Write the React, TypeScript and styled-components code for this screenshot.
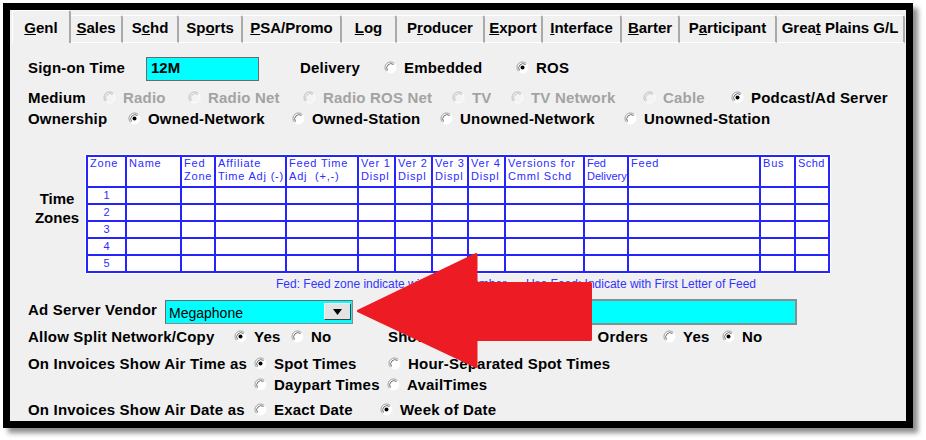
import React from "react";
import styled, { createGlobalStyle } from "styled-components";

const Global = createGlobalStyle`
  html, body { margin: 0; padding: 0; background: #ffffff; }
  body { font-family: "Liberation Sans", Arial, sans-serif; }
`;

const Page = styled.div`
  position: relative;
  width: 926px;
  height: 440px;
  padding: 3px 0 0 3px;
  box-sizing: border-box;
  overflow: hidden;
`;

const Frame = styled.div`
  width: 910px;
  height: 425px;
  box-sizing: border-box;
  border: 7px solid #000;
  background: #f0f0f0;
  box-shadow: 5px 5px 5px rgba(0, 0, 0, 0.45);
  display: flex;
  flex-direction: column;
  overflow: hidden;
`;

const TabStrip = styled.div`
  height: 33px;
  flex: none;
  display: flex;
  align-items: flex-end;
  padding-left: 2px;
`;

const Tab = styled.div<{ $w: number; $active?: boolean }>`
  width: ${(p) => p.$w}px;
  flex: none;
  box-sizing: border-box;
  height: ${(p) => (p.$active ? 33 : 28)}px;
  display: flex;
  justify-content: center;
  align-items: flex-start;
  padding-top: ${(p) => (p.$active ? 9 : 4)}px;
  border-top: 1px solid #ffffff;
  border-left: ${(p) => (p.$active ? "1px solid #ffffff" : "none")};
  border-right: 2px solid #a9a9a9;
  border-bottom: ${(p) => (p.$active ? "none" : "1px solid #ffffff")};
  border-top-right-radius: 3px;
  border-top-left-radius: ${(p) => (p.$active ? 3 : 0)}px;
  font-size: 15px;
  font-weight: bold;
  line-height: 16px;
  color: #000;
  white-space: pre;
`;

const Content = styled.div`
  display: flex;
  flex-direction: column;
  padding: 14px 0 0 18px;
`;

const Row = styled.div<{ $h: number; $mt?: number }>`
  display: flex;
  align-items: center;
  height: ${(p) => p.$h}px;
  margin-top: ${(p) => p.$mt ?? 0}px;
  flex: none;
`;

const Label = styled.span<{ $w?: number; $ml?: number; $lift?: number }>`
  flex: none;
  width: ${(p) => (p.$w ? `${p.$w}px` : "auto")};
  margin-left: ${(p) => p.$ml ?? 0}px;
  padding-bottom: ${(p) => p.$lift ?? 0}px;
  font-size: 15px;
  letter-spacing: 0.2px;
  font-weight: bold;
  color: #000;
  white-space: nowrap;
`;

const SplitLabel = styled.span<{ $w: number }>`
  flex: none;
  width: ${(p) => p.$w}px;
  margin-right: 15px;
  display: flex;
  justify-content: space-between;
  font-size: 15px;
  letter-spacing: 0.2px;
  font-weight: bold;
  color: #000;
  white-space: nowrap;
`;

const OptionWrap = styled.label<{ $w?: number; $disabled?: boolean; $lift?: number }>`
  flex: none;
  display: inline-flex;
  align-items: center;
  gap: 7px;
  width: ${(p) => (p.$w ? `${p.$w}px` : "auto")};
  padding-bottom: ${(p) => p.$lift ?? 0}px;
  font-size: 15px;
  letter-spacing: 0.2px;
  font-weight: bold;
  color: ${(p) => (p.$disabled ? "#a3a3a3" : "#000")};
  white-space: nowrap;
`;

const RadioSvg = styled.svg`
  flex: none;
  display: block;
`;

const CyanInput = styled.div<{ $w: number }>`
  flex: none;
  width: ${(p) => p.$w}px;
  height: 24px;
  box-sizing: border-box;
  background: #00ffff;
  border: 1px solid #6b6b6b;
  display: flex;
  align-items: center;
  padding: 0 0 3px 4px;
  font-size: 15px;
  font-weight: bold;
  color: #000;
`;

const Combo = styled.div`
  flex: none;
  width: 188px;
  height: 24px;
  box-sizing: border-box;
  background: #00ffff;
  border: 1px solid #8a8a8a;
  border-top-color: #6a6a6a;
  border-left-color: #6a6a6a;
  display: flex;
  align-items: center;
  justify-content: space-between;
  padding: 0 1px 0 3px;
`;

const ComboText = styled.span`
  font-size: 14px;
  color: #000;
  padding-top: 3px;
`;

const DropButton = styled.span`
  width: 27px;
  height: 17px;
  box-sizing: border-box;
  background: #e3e3e3;
  border: 1px solid;
  border-color: #f8f8f8 #404040 #404040 #f8f8f8;
  display: flex;
  align-items: center;
  justify-content: center;
`;

const WideBox = styled.div<{ $w: number; $ml: number }>`
  flex: none;
  width: ${(p) => p.$w}px;
  margin-left: ${(p) => p.$ml}px;
  height: 26px;
  box-sizing: border-box;
  background: #00ffff;
  border: 2px solid #8c8c8c;
`;

const ZoneSection = styled.div`
  display: flex;
  align-items: center;
  margin-top: 26px;
  flex: none;
`;

const ZoneLabel = styled.div`
  width: 58px;
  flex: none;
  text-align: center;
  font-size: 15px;
  font-weight: bold;
  line-height: 19px;
  color: #000;
  padding-bottom: 12px;
`;

const ZoneGrid = styled.div<{ $cols: string }>`
  display: grid;
  grid-template-columns: ${(p) => p.$cols};
  grid-template-rows: 29px repeat(5, 15px);
  gap: 2px;
  padding: 2px;
  background: #2424ff;
  box-shadow: 0 0 0 1px #ffffff;
  flex: none;
`;

const HeadCell = styled.div<{ $ls: number }>`
  background: #ffffff;
  color: #2c2cff;
  font-size: 11px;
  letter-spacing: ${(p) => p.$ls}px;
  line-height: 13px;
  padding: 0 0 0 2px;
  white-space: pre;
  overflow: visible;
`;

const BodyCell = styled.div`
  background: #ffffff;
  color: #2c2cff;
  font-size: 11px;
  line-height: 15px;
  text-align: center;
`;

const FootNote = styled.div`
  margin-top: 4px;
  margin-left: 248px;
  width: 480px;
  height: 14px;
  display: flex;
  justify-content: space-between;
  align-items: center;
  font-size: 12px;
  color: #3434ff;
  white-space: nowrap;
  flex: none;
`;

const ArrowLayer = styled.svg`
  position: absolute;
  left: 0;
  top: 0;
  pointer-events: none;
`;

function Radio({ checked, disabled }: { checked?: boolean; disabled?: boolean }) {
  return (
    <RadioSvg width="13" height="13" viewBox="0 0 13 13">
      <circle cx="6.5" cy="6.5" r="5.5" fill={disabled ? "#f4f4f4" : "#ffffff"} />
      <path d="M10.4 2.6 A5.5 5.5 0 0 0 2.6 10.4" fill="none" stroke={disabled ? "#b8b8b8" : "#9a9a9a"} strokeWidth="1" />
      <path d="M9.5 3.5 A4.3 4.3 0 0 0 3.5 9.5" fill="none" stroke={disabled ? "#c8c8c8" : "#6a6a6a"} strokeWidth="1" />
      <path d="M2.6 10.4 A5.5 5.5 0 0 0 10.4 2.6" fill="none" stroke="#ffffff" strokeWidth="1" />
      {checked && <circle cx="6.5" cy="6.5" r="2" fill="#000" />}
    </RadioSvg>
  );
}

function Option({
  text,
  w,
  checked,
  disabled,
  lift,
}: {
  text: string;
  w?: number;
  checked?: boolean;
  disabled?: boolean;
  lift?: number;
}) {
  return (
    <OptionWrap $w={w} $disabled={disabled} $lift={lift}>
      <Radio checked={checked} disabled={disabled} />
      <span>{text}</span>
    </OptionWrap>
  );
}

const tabs: { pre: string; key: string; post: string; w: number }[] = [
  { pre: "", key: "G", post: "enl", w: 59 },
  { pre: "", key: "S", post: "ales", w: 52 },
  { pre: "S", key: "c", post: "hd", w: 56 },
  { pre: "Sp", key: "o", post: "rts", w: 64 },
  { pre: "", key: "P", post: "SA/Promo", w: 99 },
  { pre: "", key: "L", post: "og", w: 55 },
  { pre: "P", key: "r", post: "oducer", w: 88 },
  { pre: "", key: "E", post: "xport", w: 58 },
  { pre: "", key: "I", post: "nterface", w: 79 },
  { pre: "", key: "B", post: "arter", w: 58 },
  { pre: "P", key: "a", post: "rticipant", w: 97 },
  { pre: "Grea", key: "t", post: " Plains G/L", w: 128 },
];

const columns: { head: string; w: number; ls?: number }[] = [
  { head: "Zone", w: 37 },
  { head: "Name", w: 53 },
  { head: "Fed\nZone", w: 32 },
  { head: "Affiliate\nTime Adj (-)", w: 69 },
  { head: "Feed Time\nAdj  (+,-)", w: 70 },
  { head: "Ver 1\nDispl", w: 35 },
  { head: "Ver 2\nDispl", w: 35 },
  { head: "Ver 3\nDispl", w: 34 },
  { head: "Ver 4\nDispl", w: 35 },
  { head: "Versions for\nCmml Schd", w: 77 },
  { head: "Fed\nDelivery", w: 42, ls: 0 },
  { head: "Feed", w: 130 },
  { head: "Bus", w: 33 },
  { head: "Schd", w: 32, ls: 0.4 },
];

export default function App() {
  const cols = columns.map((c) => `${c.w}px`).join(" ");
  return (
    <Page>
      <Global />
      <Frame>
        <TabStrip>
          {tabs.map((t, i) => (
            <Tab key={i} $w={t.w} $active={i === 0}>
              <span>
                {t.pre}
                <u>{t.key}</u>
                {t.post}
              </span>
            </Tab>
          ))}
        </TabStrip>
        <Content>
          <Row $h={24}>
            <Label $w={118} $lift={3}>Sign-on Time</Label>
            <CyanInput $w={113}>12M</CyanInput>
            <Label $w={84} $ml={41} $lift={3}>Delivery</Label>
            <Option text="Embedded" w={132} lift={3} />
            <Option text="ROS" checked lift={3} />
          </Row>
          <Row $h={21} $mt={6}>
            <Label $w={75}>Medium</Label>
            <Option text="Radio" w={85} disabled />
            <Option text="Radio Net" w={115} disabled />
            <Option text="Radio ROS Net" w={149} disabled />
            <Option text="TV" w={59} disabled />
            <Option text="TV Network" w={132} disabled />
            <Option text="Cable" w={88} disabled />
            <Option text="Podcast/Ad Server" checked />
          </Row>
          <Row $h={21}>
            <Label $w={100}>Ownership</Label>
            <Option text="Owned-Network" w={164} checked />
            <Option text="Owned-Station" w={148} />
            <Option text="Unowned-Network" w={184} />
            <Option text="Unowned-Station" />
          </Row>
          <ZoneSection>
            <ZoneLabel>
              Time
              <br />
              Zones
            </ZoneLabel>
            <ZoneGrid $cols={cols}>
              {columns.map((c, i) => (
                <HeadCell key={`h${i}`} $ls={c.ls ?? 0.8}>
                  {c.head}
                </HeadCell>
              ))}
              {[1, 2, 3, 4, 5].map((n) =>
                columns.map((c, i) => (
                  <BodyCell key={`${n}-${i}`}>{i === 0 ? n : ""}</BodyCell>
                ))
              )}
            </ZoneGrid>
          </ZoneSection>
          <FootNote>
            <span>Fed: Feed zone indicate with Zone Number.</span>
            <span>Use Feed:  Indicate with First Letter of Feed</span>
          </FootNote>
          <Row $h={25} $mt={8}>
            <Label $w={137} $lift={5}>Ad Server Vendor</Label>
            <Combo>
              <ComboText>Megaphone</ComboText>
              <DropButton>
                <svg width="9" height="6" viewBox="0 0 9 6">
                  <path d="M0 0 H9 L4.5 6 Z" fill="#000" />
                </svg>
              </DropButton>
            </Combo>
            <WideBox $w={377} $ml={67} />
          </Row>
          <Row $h={18} $mt={3}>
            <Label $w={206}>Allow Split Network/Copy</Label>
            <Option text="Yes" w={57} checked />
            <Option text="No" w={97} />
            <SplitLabel $w={260}>
              <span>Show Split</span>
              <span>Orders</span>
            </SplitLabel>
            <Option text="Yes" w={59} />
            <Option text="No" checked />
          </Row>
          <Row $h={20} $mt={8}>
            <Label $w={226}>On Invoices Show Air Time as</Label>
            <Option text="Spot Times" w={134} checked />
            <Option text="Hour-Separated Spot Times" />
          </Row>
          <Row $h={20} $mt={1}>
            <Label $w={226} />
            <Option text="Daypart Times" w={133} />
            <Option text="AvailTimes" />
          </Row>
          <Row $h={20} $mt={5}>
            <Label $w={226}>On Invoices Show Air Date as</Label>
            <Option text="Exact Date" w={126} />
            <Option text="Week of Date" checked />
          </Row>
        </Content>
      </Frame>
      <ArrowLayer width="926" height="440" viewBox="0 0 926 440">
        <polygon
          points="358.5,311 476,254.5 476,283.5 590.5,283.5 590.5,339.5 476,339.5 476,366.5"
          fill="#ed1c24"
          stroke="#ed1c24"
          strokeWidth="3"
          strokeLinejoin="round"
        />
      </ArrowLayer>
    </Page>
  );
}
